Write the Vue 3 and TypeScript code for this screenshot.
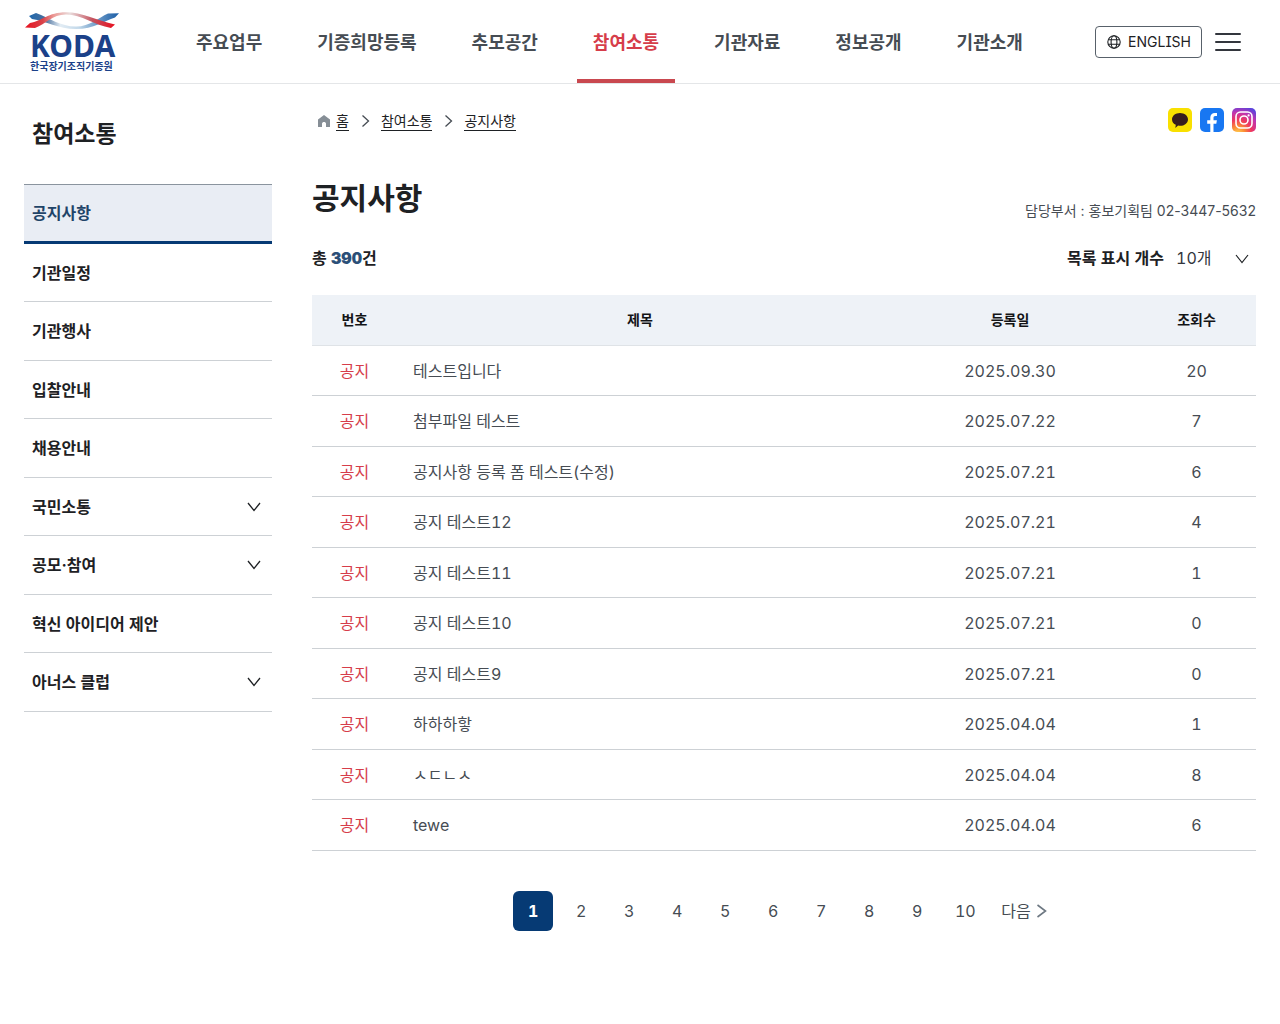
<script setup lang="ts">
import { ref } from 'vue'

interface SideItem {
  label: string
  expandable?: boolean
}

interface Notice {
  title: string
  date: string
  views: number
}

const menus: string[] = ['주요업무', '기증희망등록', '추모공간', '참여소통', '기관자료', '정보공개', '기관소개']
const activeMenu = '참여소통'

const sideItems: SideItem[] = [
  { label: '공지사항' },
  { label: '기관일정' },
  { label: '기관행사' },
  { label: '입찰안내' },
  { label: '채용안내' },
  { label: '국민소통', expandable: true },
  { label: '공모·참여', expandable: true },
  { label: '혁신 아이디어 제안' },
  { label: '아너스 클럽', expandable: true },
]
const activeSide = '공지사항'

const notices: Notice[] = [
  { title: '테스트입니다', date: '2025.09.30', views: 20 },
  { title: '첨부파일 테스트', date: '2025.07.22', views: 7 },
  { title: '공지사항 등록 폼 테스트(수정)', date: '2025.07.21', views: 6 },
  { title: '공지 테스트12', date: '2025.07.21', views: 4 },
  { title: '공지 테스트11', date: '2025.07.21', views: 1 },
  { title: '공지 테스트10', date: '2025.07.21', views: 0 },
  { title: '공지 테스트9', date: '2025.07.21', views: 0 },
  { title: '하하하핳', date: '2025.04.04', views: 1 },
  { title: 'ㅅㄷㄴㅅ', date: '2025.04.04', views: 8 },
  { title: 'tewe', date: '2025.04.04', views: 6 },
]

const pageSize = ref(10)
const page = ref(1)
</script>

<template>
  <div class="site">
    <header class="header">
      <a href="#" class="logo" aria-label="한국장기조직기증원">
        <svg width="96" height="64" viewBox="0 0 96 64">
          <defs>
            <linearGradient id="ribbonRed" x1="0" x2="1">
              <stop offset="0" stop-color="#e8101f" />
              <stop offset="0.2" stop-color="#d8434a" />
              <stop offset="0.32" stop-color="#ec9a96" />
              <stop offset="0.5" stop-color="#e9dcdc" />
              <stop offset="0.75" stop-color="#c4525e" />
              <stop offset="1" stop-color="#e8101f" />
            </linearGradient>
            <linearGradient id="ribbonBlue" x1="0" x2="1">
              <stop offset="0" stop-color="#1f68ae" />
              <stop offset="0.18" stop-color="#4a6f9c" />
              <stop offset="0.35" stop-color="#e2ecf4" />
              <stop offset="0.55" stop-color="#c3d9ea" />
              <stop offset="0.75" stop-color="#6f9cc8" />
              <stop offset="1" stop-color="#1a5da6" />
            </linearGradient>
          </defs>
          <path d="M5 6 L12 3 C26 8 36 16.500 52 16.500 C66 16.500 74 8 84 3.500 L95 3.200 L91 7.500 C80 11 70 19 52 19 C34 19 22 11 8 9 Z" fill="url(#ribbonBlue)" />
          <path d="M1 17.500 L6 13 C18 11 24 2.200 42 2.200 C58 2.200 72 10 91 14.500 L87 18 C70 15 58 4.500 42 4.500 C28 4.500 22 14 11 18 Z" fill="url(#ribbonRed)" />
          <text x="6" y="47" class="logo-name">KODA</text>
          <text x="6" y="60" class="logo-sub">한국장기조직기증원</text>
        </svg>
      </a>
      <nav class="gnb" aria-label="주 메뉴">
        <a v-for="menu in menus" :key="menu" href="#" :class="{ active: menu === activeMenu }">{{ menu }}</a>
      </nav>
      <div class="tools">
        <button type="button" class="lang">
          <svg width="16" height="16" viewBox="0 0 16 16" fill="none" stroke="#1e2124" stroke-width="1.1">
            <circle cx="8" cy="8" r="6.2" />
            <ellipse cx="8" cy="8" rx="2.9" ry="6.2" />
            <path d="M2.4 5.7h11.2M2.4 10.3h11.2" />
          </svg>
          ENGLISH
        </button>
        <button type="button" class="menu-button" aria-label="전체 메뉴">
          <svg width="28" height="20" viewBox="0 0 28 20" stroke="#33363d" stroke-width="2" stroke-linecap="round">
            <path d="M2 2h24M2 10h24M2 18h24" />
          </svg>
        </button>
      </div>
    </header>

    <div class="body">
      <aside class="side">
        <h2>참여소통</h2>
        <ul>
          <li v-for="item in sideItems" :key="item.label">
            <a href="#" :class="{ active: item.label === activeSide }">
              {{ item.label }}
              <svg v-if="item.expandable" width="20" height="20" viewBox="0 0 20 20" fill="none" stroke="#1e2124" stroke-width="1.3">
                <path d="M4 6l6 7.500 6-7.500" />
              </svg>
            </a>
          </li>
        </ul>
      </aside>

      <main class="content">
        <div class="top-row">
          <nav class="crumbs" aria-label="현재 위치">
            <svg width="16" height="16" viewBox="0 0 16 16" fill="#868e96">
              <path d="M8 2 L14 6.600 V14 H10 V10.600 C10 8.400 6 8.400 6 10.600 V14 H2 V6.600 Z" />
            </svg>
            <a href="#" class="home">홈</a>
            <svg class="sep" width="16" height="16" viewBox="0 0 16 16" fill="none" stroke="#464c53" stroke-width="1.3"><path d="M5.500 2.500l6 5.500-6 5.500" /></svg>
            <a href="#">참여소통</a>
            <svg class="sep" width="16" height="16" viewBox="0 0 16 16" fill="none" stroke="#464c53" stroke-width="1.3"><path d="M5.500 2.500l6 5.500-6 5.500" /></svg>
            <a href="#">공지사항</a>
          </nav>
          <div class="social">
            <a href="#" aria-label="카카오톡">
              <svg width="24" height="24" viewBox="0 0 24 24">
                <rect width="24" height="24" rx="5" fill="#f9e000" />
                <path d="M12 5c4.500 0 8 2.800 8 6.400s-3.500 6.400-8 6.400c-.7 0-1.300-.1-1.900-.2L7.300 20l.5-3.200C5.500 15.700 4 13.700 4 11.400 4 7.800 7.500 5 12 5z" fill="#371d1e" />
              </svg>
            </a>
            <a href="#" aria-label="페이스북">
              <svg width="24" height="24" viewBox="0 0 24 24">
                <rect width="24" height="24" rx="5" fill="#1877f2" />
                <path d="M10.300 24v-8.300H7.200v-3.500h3.100V9.600c0-3.100 1.800-4.700 4.600-4.700.8 0 1.500.1 2.100.2v3h-1.600c-1.500 0-1.900.8-1.900 1.900v2.200h3.400l-.6 3.500h-2.800V24z" fill="#fff" />
              </svg>
            </a>
            <a href="#" aria-label="인스타그램">
              <svg width="24" height="24" viewBox="0 0 24 24" fill="none">
                <defs>
                  <radialGradient id="insta" cx="0.25" cy="1.05" r="1.15">
                    <stop offset="0" stop-color="#ffd04f" />
                    <stop offset="0.25" stop-color="#fb8a35" />
                    <stop offset="0.5" stop-color="#ee3560" />
                    <stop offset="0.75" stop-color="#c234ae" />
                    <stop offset="1" stop-color="#5b43dc" />
                  </radialGradient>
                </defs>
                <rect width="24" height="24" rx="5" fill="url(#insta)" />
                <rect x="4" y="4" width="16" height="16" rx="4.500" stroke="#fff" stroke-width="1.600" />
                <circle cx="12" cy="12" r="4" stroke="#fff" stroke-width="1.600" />
                <circle cx="16.600" cy="7.400" r="1.100" fill="#fff" />
              </svg>
            </a>
          </div>
        </div>

        <div class="title-row">
          <h1>공지사항</h1>
          <p>담당부서 : 홍보기획팀 02-3447-5632</p>
        </div>

        <div class="list-tools">
          <p class="total">총 <strong>390</strong>건</p>
          <div class="size">
            <label for="page-size">목록 표시 개수</label>
            <span class="select">
              <select id="page-size" v-model="pageSize">
                <option :value="10">10개</option>
                <option :value="20">20개</option>
                <option :value="50">50개</option>
              </select>
              <svg width="20" height="20" viewBox="0 0 20 20" fill="none" stroke="#1e2124" stroke-width="1.2">
                <path d="M4 7l6 7.500 6-7.500" />
              </svg>
            </span>
          </div>
        </div>

        <table>
          <colgroup>
            <col class="col-no" />
            <col />
            <col class="col-date" />
            <col class="col-views" />
          </colgroup>
          <thead>
            <tr>
              <th scope="col">번호</th>
              <th scope="col">제목</th>
              <th scope="col">등록일</th>
              <th scope="col">조회수</th>
            </tr>
          </thead>
          <tbody>
            <tr v-for="notice in notices" :key="notice.title">
              <td class="mark">공지</td>
              <td class="subject"><a href="#">{{ notice.title }}</a></td>
              <td>{{ notice.date }}</td>
              <td>{{ notice.views }}</td>
            </tr>
          </tbody>
        </table>

        <nav class="paging" aria-label="페이지">
          <button v-for="n in 10" :key="n" type="button" :class="{ current: n === page }" @click="page = n">{{ n }}</button>
          <button type="button" class="next">
            다음
            <svg width="16" height="16" viewBox="0 0 16 16" fill="none" stroke="#6d7882" stroke-width="1.6"><path d="M6.500 2l8 6-8 6" /></svg>
          </button>
        </nav>
      </main>
    </div>
  </div>
</template>

<style>
body {
  margin: 0;
  background: #fff;
}
</style>

<style scoped>
.site {
  font-family: Inter, "Noto Sans CJK KR", sans-serif;
  font-size: 16px;
  line-height: 24px;
  font-variant-numeric: tabular-nums;
  color: #1e2124;
}

h1,
h2,
p,
ul {
  margin: 0;
  padding: 0;
}

a {
  color: inherit;
  text-decoration: none;
}

button,
select {
  font: inherit;
  font-variant-numeric: inherit;
  color: inherit;
  background: none;
  border: 0;
  padding: 0;
  cursor: pointer;
}

svg {
  display: block;
  flex: none;
}

.header {
  display: flex;
  align-items: center;
  height: 83px;
  padding: 0 34px 0 24px;
  border-bottom: 1px solid #e4e6e8;
}

.logo-name {
  font: 700 30px "Noto Sans", sans-serif;
  fill: #1b4189;
}

.logo-sub {
  font: 700 10px "Noto Sans CJK KR", sans-serif;
  fill: #1b4189;
}

.gnb {
  display: flex;
  align-self: stretch;
  gap: 23px;
  margin-left: 60px;
}

.gnb a {
  box-sizing: border-box;
  padding: 6px 16px 0;
  border-bottom: 4px solid transparent;
  font-size: 18px;
  font-weight: 700;
  line-height: 73px;
  color: #464c53;
  white-space: nowrap;
}

.gnb a.active {
  color: #d63d4a;
  border-bottom-color: #c9484f;
}

.tools {
  display: flex;
  align-items: center;
  gap: 8px;
  margin-left: auto;
}

.lang {
  display: flex;
  align-items: center;
  gap: 6px;
  height: 32px;
  padding: 0 10px;
  border: 1px solid #58616a;
  border-radius: 4px;
  font-size: 14px;
  font-feature-settings: "cv08";
}

.menu-button {
  padding: 4px;
}

.body {
  display: flex;
  gap: 40px;
  padding: 0 24px 48px;
}

.side {
  flex: none;
  width: 248px;
}

.side h2 {
  padding-left: 8px;
  font-size: 23px;
  font-weight: 700;
  line-height: 100px;
}

.side ul {
  list-style: none;
}

.side a {
  display: flex;
  align-items: center;
  justify-content: space-between;
  box-sizing: border-box;
  height: 59px;
  padding: 0 8px;
  border-bottom: 1px solid #cdd1d5;
  font-weight: 700;
}

.side li:nth-child(even) a {
  height: 58px;
}

.side a.active {
  height: 60px;
  border-top: 1px solid #8a949e;
  border-bottom: 3px solid #063a74;
  background: #e9edf4;
  color: #1f4468;
}

.content {
  flex: 1;
  min-width: 0;
}

.top-row {
  display: flex;
  align-items: center;
  justify-content: space-between;
  padding-top: 24px;
}

.crumbs {
  display: flex;
  align-items: center;
  padding: 2px 0 0 4px;
  font-size: 14px;
  line-height: 18px;
}

.crumbs a {
  border-bottom: 1px solid #1e2124;
}

.crumbs .home {
  margin-left: 4px;
}

.sep {
  margin: 0 8px;
}

.social {
  display: flex;
  gap: 8px;
}

.title-row {
  display: flex;
  align-items: flex-end;
  justify-content: space-between;
  margin-top: 42px;
}

h1 {
  font-size: 30px;
  font-weight: 700;
  line-height: 48px;
}

.title-row p {
  font-size: 14px;
  line-height: 22px;
  font-variant-numeric: normal;
  color: #464c53;
}

.list-tools {
  display: flex;
  justify-content: space-between;
  margin: 24px 0 25px;
}

.total {
  font-weight: 700;
}

.total strong {
  color: #2b4f78;
}

.size {
  display: flex;
  gap: 12px;
}

.size label {
  font-weight: 700;
}

.select {
  position: relative;
}

.select select {
  width: 80px;
  height: 24px;
  appearance: none;
  color: #33363d;
}

.select svg {
  position: absolute;
  top: 2px;
  right: 4px;
  pointer-events: none;
}

table {
  width: 100%;
  table-layout: fixed;
  border-spacing: 0;
  text-align: center;
  color: #464c53;
}

.col-no {
  width: 85px;
}

.col-date {
  width: 254px;
}

.col-views {
  width: 119px;
}

th,
td {
  box-sizing: border-box;
  height: 50px;
  padding: 0 16px;
  border-bottom: 1px solid #cdd1d5;
}

th {
  height: 51px;
  background: #eef2f7;
  border-bottom-color: #dfe3e7;
  font-size: 14px;
  font-weight: 700;
  color: #131416;
}

tr:nth-child(even) td {
  height: 51px;
}

.mark {
  color: #d63d4a;
}

.subject {
  text-align: left;
}

.paging {
  display: flex;
  justify-content: center;
  gap: 8px;
  margin-top: 40px;
  color: #464c53;
}

.paging button {
  min-width: 40px;
  height: 40px;
  border-radius: 6px;
}

.paging .current {
  background: #063a74;
  color: #fff;
  font-weight: 700;
}

.paging .next {
  display: flex;
  align-items: center;
  padding: 0 8px;
}
</style>
